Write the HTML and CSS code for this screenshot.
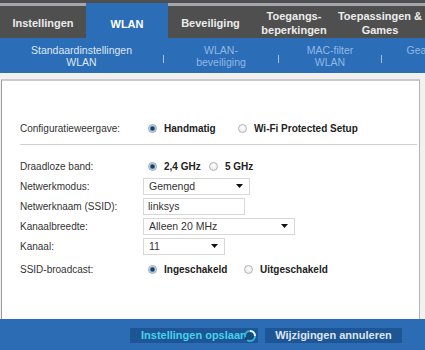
FILE: index.html
```html
<!DOCTYPE html>
<html lang="nl">
<head>
<meta charset="utf-8">
<title>WLAN</title>
<link rel="stylesheet" href="styles.css">
</head>
<body>
<div class="page">
  <nav class="tabs">
    <div class="tab t1">Instellingen</div>
    <div class="tab t2 active">WLAN</div>
    <div class="tab t3">Beveiliging</div>
    <div class="tab t4">Toegangs-<br>beperkingen</div>
    <div class="tab t5">Toepassingen &amp;<br>Games</div>
  </nav>
  <nav class="subnav">
    <div class="sub s1 active">Standaardinstellingen<br>WLAN</div>
    <span class="sep"></span>
    <div class="sub s2">WLAN-<br>beveiliging</div>
    <span class="sep"></span>
    <div class="sub s3">MAC-filter<br>WLAN</div>
    <span class="sep"></span>
    <div class="sub s4">Geavanceerde<br>WLAN</div>
  </nav>
  <main class="main">
    <div class="panel">
      <div class="row">
        <div class="label">Configuratieweergave:</div>
        <div class="opt first w90"><span class="radio on"></span><span class="otext">Handmatig</span></div>
        <div class="opt"><span class="radio"></span><span class="otext">Wi-Fi Protected Setup</span></div>
      </div>
      <div class="rule"></div>
      <div class="row band">
        <div class="label">Draadloze band:</div>
        <div class="opt first w61"><span class="radio on"></span><span class="otext">2,4 GHz</span></div>
        <div class="opt"><span class="radio"></span><span class="otext">5 GHz</span></div>
      </div>
      <div class="row">
        <div class="label">Netwerkmodus:</div>
        <div class="select sel-modus"><span>Gemengd</span><svg class="arrow" width="7" height="4" viewBox="0 0 7 4"><path d="M0 0H7L3.5 4Z" fill="#111"/></svg></div>
      </div>
      <div class="row">
        <div class="label">Netwerknaam (SSID):</div>
        <div class="input">linksys</div>
      </div>
      <div class="row">
        <div class="label">Kanaalbreedte:</div>
        <div class="select sel-breedte"><span>Alleen 20 MHz</span><svg class="arrow" width="7" height="4" viewBox="0 0 7 4"><path d="M0 0H7L3.5 4Z" fill="#111"/></svg></div>
      </div>
      <div class="row">
        <div class="label">Kanaal:</div>
        <div class="select sel-kanaal"><span>11</span><svg class="arrow" width="7" height="4" viewBox="0 0 7 4"><path d="M0 0H7L3.5 4Z" fill="#111"/></svg></div>
      </div>
      <div class="row broadcast">
        <div class="label">SSID-broadcast:</div>
        <div class="opt first w96"><span class="radio on"></span><span class="otext">Ingeschakeld</span></div>
        <div class="opt"><span class="radio"></span><span class="otext">Uitgeschakeld</span></div>
      </div>
    </div>
  </main>
  <footer class="footer">
    <div class="btn save">Instellingen opslaan
      <svg class="spinner" width="14" height="14" viewBox="0 0 14 14"><circle cx="7" cy="7" r="5" fill="#17497e" stroke="#2fb6d2" stroke-width="2"/><path d="M7 2A5 5 0 0 1 12 7" stroke="#e6f7fb" stroke-width="2" fill="none"/><path d="M2.2 8.4A5 5 0 0 0 4 11" stroke="#0f3a66" stroke-width="2" fill="none"/></svg>
    </div>
    <div class="btn cancel">Wijzigingen annuleren</div>
  </footer>
</div>
</body>
</html>
```
FILE: styles.css
```css
html, body {
  margin: 0;
  padding: 0;
}
body {
  width: 425px;
  height: 350px;
  overflow: hidden;
  font-family: "Liberation Sans", Arial, sans-serif;
  background: #ffffff;
}
.page {
  width: 425px;
  height: 350px;
  display: flex;
  flex-direction: column;
  overflow: hidden;
}

/* top tabs */
.tabs {
  display: flex;
  height: 38px;
  box-sizing: border-box;
  padding-top: 3px;
  background: #4f4f4f;
  flex: none;
}
.tab {
  flex: none;
  box-sizing: border-box;
  border-top: 3px solid #a5a7ad;
  display: flex;
  align-items: center;
  justify-content: center;
  text-align: center;
  color: #ececec;
  font-weight: bold;
  font-size: 11px;
  line-height: 14px;
  white-space: nowrap;
  padding-top: 1px;
}
.tab.active {
  background: #2b6db6;
  border-top-color: #2b6db6;
  color: #ffffff;
  padding-top: 3px;
}
.t1 { width: 86px; }
.t2 { width: 82px; }
.t3 { width: 85px; }
.t4 { width: 82px; }
.t5 { width: 90px; }

/* sub navigation */
.subnav {
  display: flex;
  align-items: center;
  height: 35px;
  background: #2b6db6;
  flex: none;
  font-size: 10.5px;
  line-height: 11.5px;
  white-space: nowrap;
  overflow: hidden;
}
.sub {
  flex: none;
  text-align: center;
  color: #8fb9e7;
  padding-top: 2px;
}
.sub.active { color: #dce8f5; }
.s1 { width: 163px; }
.s2 { width: 114px; }
.s3 { width: 102px; }
.s4 { width: 118px; }
.sep {
  flex: none;
  width: 1px;
  height: 8px;
  margin-top: 7px;
  background: #a3c4e8;
}

/* main panel */
.main {
  flex: 1;
  background: #f1f1f1;
  padding-top: 6px;
  display: flex;
  flex-direction: column;
}
.panel {
  flex: 1;
  margin: 0 5px 0 1px;
  background: #ffffff;
  border-top: 2px solid #cacaca;
  border-left: 1px solid #9a9a9a;
  border-right: 1px solid #b4b4b4;
  padding: 37px 2px 0 18px;
}
.row {
  display: flex;
  align-items: center;
  height: 20px;
  font-size: 10px;
  color: #333333;
}
.label {
  width: 123px;
  flex: none;
}
.rule {
  height: 1px;
  background: #d0d0d0;
  margin: 6px 0 11px;
}
.broadcast { margin-top: 3px; }

.opt {
  display: flex;
  align-items: center;
  flex: none;
}
.opt.first { margin-left: 5px; }
.w90 { width: 90px; }
.w61 { width: 61px; }
.w96 { width: 96px; }
.radio {
  width: 9px;
  height: 9px;
  box-sizing: border-box;
  border-radius: 50%;
  border: 1px solid #b4b4b4;
  background: radial-gradient(circle at 50% 40%, #ffffff 0, #e2e2e2 100%);
  flex: none;
}
.radio.on {
  border-color: #9aa8b4;
  background: radial-gradient(circle, #1d3e5e 0, #1d3e5e 1.5px, #6f9fc4 2.4px, #dfe9f1 3.4px);
}
.otext {
  margin-left: 7px;
  font-weight: bold;
  color: #222222;
}

.select, .input {
  height: 17px;
  box-sizing: border-box;
  border: 1px solid #d8d8d8;
  background: #ffffff;
  display: flex;
  align-items: center;
  font-size: 10.5px;
  color: #333333;
  flex: none;
}
.select {
  justify-content: space-between;
  padding: 0 6px 0 5px;
}
.input { padding-left: 4px; width: 102px; }
.sel-modus { width: 107px; }
.sel-breedte { width: 152px; }
.sel-kanaal { width: 82px; }
.arrow { flex: none; }

/* footer */
.footer {
  height: 31px;
  flex: none;
  background: #2c6cb4;
  display: flex;
  align-items: flex-start;
  box-sizing: border-box;
  padding: 9px 0 0 130px;
}
.btn {
  height: 15px;
  box-sizing: border-box;
  background: #1e5594;
  font-size: 11px;
  font-weight: bold;
  line-height: 15px;
  white-space: nowrap;
  flex: none;
}
.save {
  width: 128px;
  padding-left: 11px;
  color: #45d3ec;
  position: relative;
  overflow: visible;
}
.spinner {
  position: absolute;
  left: 113px;
  top: 1px;
}
.cancel {
  width: 137px;
  margin-left: 7px;
  text-align: center;
  color: #dce6f1;
}
```
